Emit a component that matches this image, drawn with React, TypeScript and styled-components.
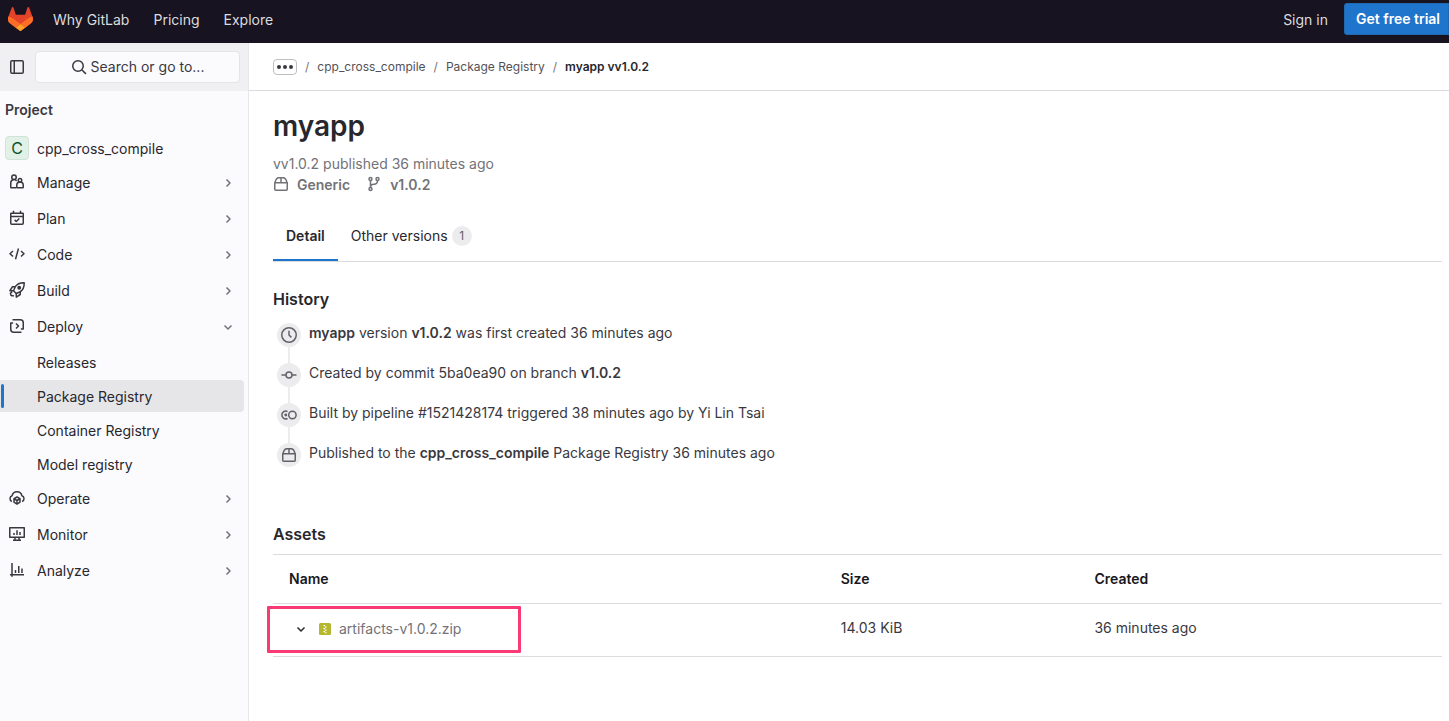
import React from 'react';
import styled, { createGlobalStyle, css } from 'styled-components';

const GlobalStyle = createGlobalStyle`
  *, *::before, *::after { box-sizing: border-box; }
  html, body { margin: 0; padding: 0; }
  body {
    background: #fff;
    color: #28272d;
    font-family: Inter, "Noto Sans", sans-serif;
    font-size: 14px;
    line-height: 20px;
  }
  a { color: inherit; text-decoration: none; }
  button { font: inherit; color: inherit; cursor: pointer; }
  ul, ol { list-style: none; margin: 0; padding: 0; }
  svg { display: block; flex: none; }
`;

/* ---------- icons ---------- */

type IconName =
  | 'sidebar' | 'search' | 'users' | 'planning' | 'code' | 'rocket' | 'deployments'
  | 'cloud-pod' | 'monitor' | 'chart' | 'chevron-right' | 'chevron-down' | 'package'
  | 'branch' | 'clock' | 'commit' | 'pipeline' | 'archive' | 'ellipsis';

const shapes: Record<IconName, React.ReactNode> = {
  sidebar: (
    <>
      <rect x="1.75" y="1.75" width="12.5" height="12.5" rx="1.25" />
      <path d="M5.25 2v12" />
    </>
  ),
  search: (
    <>
      <circle cx="7" cy="7" r="5.25" />
      <path d="m11 11 3.9 3.9" />
    </>
  ),
  users: (
    <>
      <circle cx="5" cy="3.25" r="2.25" />
      <path d="M7.250 13.75H2.25a.5.5 0 0 1-.5-.5V8.900a3.25 3.25 0 0 1 5.900-1.900" />
      <circle cx="11" cy="6.250" r="1.75" />
      <path d="M7.75 13.25V11.250a3.25 3.25 0 0 1 6.5 0v2a.5.5 0 0 1-.5.5h-5.5a.5.5 0 0 1-.5-.5Z" />
    </>
  ),
  planning: (
    <>
      <path d="M1.75 3.75a.5.5 0 0 1 .5-.5h11.5a.5.5 0 0 1 .5.5v9.5a1 1 0 0 1-1 1H2.75a1 1 0 0 1-1-1Z" />
      <path d="M2 6.5h12M4.5.8v2.4M11.5.8v2.4" />
      <path d="m5.6 9.9 1.7 1.6 3-3" />
    </>
  ),
  code: <path d="M4 5 1 7.75 4 10.5M12 5l3 2.75L12 10.5M9.5 2.5l-3 10.7" />,
  rocket: (
    <>
      <path d="M15.2.8c-4.4-.1-7.2 1.3-8.9 3.9L4.5 8.8l2.7 2.7 4.1-1.8c2.6-1.7 4-4.500 3.900-8.900Z" />
      <path d="M6.2 4.75H3.5L.9 8.7l3.4.1M11.25 9.8v2.7L7.3 15.1l-.1-3.4M3.1 9.7l-1.7 1.6.8 2.5M4.9 13.7l-2.7.1" />
      <circle cx="10.2" cy="5.8" r="1.2" fill="currentColor" />
    </>
  ),
  deployments: (
    <>
      <path d="M3.5 1.75h7.75a3 3 0 0 1 3 3V11h-2.4" />
      <path d="M12.5 14.25H4.75a3 3 0 0 1-3-3V5h2.4" />
      <path d="m7 5.5 2.5 2.5L7 10.5" />
    </>
  ),
  'cloud-pod': (
    <>
      <path d="M2.9 11.5A3.1 3.1 0 0 1 3.1 5.7a5 5 0 0 1 9.8 0 3.1 3.1 0 0 1 .2 5.8" />
      <path d="m8 7 3 1.6v3.6l-3 1.900-3-1.900V8.600ZM5 8.700l3 1.800 3-1.800M8 10.500V14" />
    </>
  ),
  monitor: (
    <>
      <path d="M.75 1.75h14.5v9.5H.75ZM6 11.5v2.7M10 11.5v2.7M4 14.25h8" />
      <path d="M5 7v2M8 4.2V9M11 6v3" />
    </>
  ),
  chart: <path d="M3 1v13.8M1 12.75h14M6.5 8v3M9.75 4v7M13 6.5V11" />,
  'chevron-right': <path d="m6.5 4.5 3.5 3.5-3.5 3.5" />,
  'chevron-down': <path d="M4.5 6.5 8 10l3.5-3.5" />,
  package: (
    <>
      <path d="M1.75 6.75h12.5v6.5a1 1 0 0 1-1 1H2.75a1 1 0 0 1-1-1Z" />
      <path d="M2 6.75c.5-2.700 1.600-4.600 3.500-5h5c1.900.4 3 2.300 3.500 5M8 1.75v5" />
    </>
  ),
  branch: (
    <>
      <circle cx="4.5" cy="3" r="1.5" />
      <circle cx="11.5" cy="3" r="1.5" />
      <circle cx="4.5" cy="13" r="1.5" />
      <path d="M4.500 4.500v7M11.500 4.500c0 2.700-1.200 3.700-3.500 3.700-2 0-3.500.5-3.500 2.500" />
    </>
  ),
  clock: (
    <>
      <circle cx="8" cy="8" r="7.25" />
      <path d="M8 3.7V8l2.4 2.4" />
    </>
  ),
  commit: (
    <>
      <circle cx="8" cy="8" r="3" />
      <path d="M.5 8h4.3M11.2 8h4.3" />
    </>
  ),
  pipeline: (
    <>
      <circle cx="11.4" cy="8" r="3.7" />
      <path d="M6.5 4.500A3.800 3.800 0 0 0 .9 8a3.800 3.800 0 0 0 5.600 3.500" />
      <circle cx="4.8" cy="8" r=".7" fill="currentColor" />
    </>
  ),
  archive: (
    <>
      <rect width="16" height="16" rx="2" fill="#b5b82e" stroke="none" />
      <path d="M6 3.5h2M8 5.5h2M6 7.5h2M8 9.5h2M6 11.5h2M8 13h2" stroke="#fff" />
    </>
  ),
  ellipsis: (
    <g fill="currentColor" stroke="none">
      <circle cx="2" cy="8" r="2" />
      <circle cx="8" cy="8" r="2" />
      <circle cx="14" cy="8" r="2" />
    </g>
  ),
};

const Icon = ({ name, size = 16 }: { name: IconName; size?: number }) => (
  <svg
    width={size}
    height={size}
    viewBox="0 0 16 16"
    fill="none"
    stroke="currentColor"
    strokeWidth="1.5"
    strokeLinejoin="round"
    aria-hidden="true"
  >
    {shapes[name]}
  </svg>
);

const Logo = () => (
  <svg width="25" height="24" viewBox="0 0 25 24" aria-hidden="true">
    <path fill="#E24329" d="m24.507 9.5-.034-.09L21.082.562a.896.896 0 0 0-1.694.091l-2.29 7.01H7.825L5.535.653a.898.898 0 0 0-1.694-.09L.451 9.411.416 9.5a6.297 6.297 0 0 0 2.09 7.278l.012.01.03.022 5.16 3.867 2.56 1.935 1.554 1.176a1.051 1.051 0 0 0 1.268 0l1.555-1.176 2.56-1.935 5.197-3.89.014-.01A6.297 6.297 0 0 0 24.507 9.5Z" />
    <path fill="#FC6D26" d="m24.507 9.5-.034-.09a11.44 11.44 0 0 0-4.56 2.051l-7.447 5.632 4.742 3.584 5.197-3.89.014-.01A6.297 6.297 0 0 0 24.507 9.5Z" />
    <path fill="#FCA326" d="m7.707 20.677 2.56 1.935 1.555 1.176a1.051 1.051 0 0 0 1.268 0l1.555-1.176 2.56-1.935-4.743-3.584-4.755 3.584Z" />
    <path fill="#FC6D26" d="M5.01 11.461a11.43 11.43 0 0 0-4.56-2.05L.416 9.5a6.297 6.297 0 0 0 2.09 7.278l.012.01.03.022 5.16 3.867 4.745-3.584-7.444-5.632Z" />
  </svg>
);

/* ---------- page frame ---------- */

const Page = styled.div`
  min-height: 100vh;
  display: flex;
  flex-direction: column;
`;

const TopBar = styled.header`
  display: flex;
  align-items: center;
  padding: 3px 0 8px 8px;
  background: #171321;
  color: #dcdcde;
`;

const TopNav = styled.nav`
  display: flex;
  flex: 1;
  gap: 24px;
  margin-left: 20px;
`;

const TopLink = styled.a`
  padding-top: 2px;
  font-weight: 400;
`;

const TrialButton = styled.button`
  height: 32px;
  margin-left: 16px;
  padding: 0 9px 0 12px;
  border: 0;
  border-radius: 4px 0 0 4px;
  background: #1f75cb;
  box-shadow: inset 0 0 0 1px #2268ae;
  color: #fff;
  font-weight: 600;
  white-space: nowrap;
`;

const Columns = styled.div`
  display: flex;
  flex: 1;
`;

/* ---------- sidebar ---------- */

const Sidebar = styled.aside`
  flex: 0 0 249px;
  border-right: 1px solid #e7e7ea;
  background: #fbfafd;
`;

const SidebarHead = styled.div`
  display: flex;
  align-items: center;
  gap: 10px;
  padding: 8px 8px 8px 9px;
  background: #f0f0f2;
`;

const IconButton = styled.button`
  padding: 0;
  border: 0;
  background: none;
  color: #3a383f;
`;

const SearchButton = styled.button`
  display: flex;
  flex: 1;
  align-items: center;
  justify-content: center;
  gap: 4px;
  height: 32px;
  padding: 0;
  border: 1px solid #e4e4e7;
  border-radius: 4px;
  background: #fbfafd;
  color: #3a383f;
`;

const SidebarTitle = styled.h2`
  margin: 0;
  padding: 9px 5px 12px;
  font-size: 14px;
  font-weight: 600;
  line-height: 20px;
  color: #3a383f;
`;

const NavItem = styled.li<{ $gap?: number }>`
  margin-bottom: ${({ $gap = 4 }) => $gap}px;
`;

const rowStyle = css`
  display: flex;
  align-items: center;
  width: 244px;
  height: 32px;
  border: 0;
  border-radius: 0 4px 4px 0;
  text-align: left;
`;

const ProjectLink = styled.a`
  ${rowStyle}
  gap: 8px;
  padding: 2px 0 0 5px;
`;

const Avatar = styled.span`
  width: 24px;
  height: 24px;
  margin-bottom: 2px;
  border: 1px solid #cfe3d6;
  border-radius: 4px;
  background: #e2f1e7;
  color: #0d532a;
  font-size: 16px;
  line-height: 22px;
  text-align: center;
`;

const SectionButton = styled.button`
  ${rowStyle}
  gap: 12px;
  padding: 2px 8px 0 9px;
  background: none;
`;

const SectionIcon = styled.span`
  margin-bottom: 2px;
  color: #3a383f;
`;

const Chevron = styled.span`
  margin-left: auto;
  color: #737278;
`;

const SubList = styled.ul`
  display: grid;
  gap: 2px;
  margin-top: 4px;
`;

const SubLink = styled.a<{ $active?: boolean }>`
  ${rowStyle}
  padding: 2px 0 0 ${({ $active }) => ($active ? 1 : 37)}px;
  background: ${({ $active }) => ($active ? '#e6e6e8' : 'transparent')};
  ${({ $active }) =>
    $active &&
    css`
      &::before {
        content: '';
        width: 3px;
        height: 24px;
        margin: 0 33px 2px 0;
        border-radius: 2px;
        background: #1f75cb;
      }
    `}
`;

/* ---------- content ---------- */

const Content = styled.div`
  flex: 1;
  min-width: 0;
`;

const Crumbs = styled.nav`
  border-bottom: 1px solid #dcdcde;
  padding: 12px 24px;
  font-size: 12px;
  line-height: 23px;
  color: #535158;
`;

const CrumbList = styled.ol`
  display: flex;
  align-items: center;
`;

const Crumb = styled.li<{ $current?: boolean }>`
  display: flex;
  align-items: center;
  font-weight: ${({ $current }) => ($current ? 600 : 400)};
  color: ${({ $current }) => ($current ? '#28272d' : 'inherit')};
  &:not(:first-child)::before {
    content: '/';
    margin: 0 8px;
    font-weight: 400;
    color: #737278;
  }
`;

const MoreButton = styled.button`
  display: flex;
  align-items: center;
  justify-content: center;
  width: 24px;
  height: 16px;
  padding: 0;
  border: 1px solid #bfbfc3;
  border-radius: 4px;
  background: #fff;
  color: #3a383f;
`;

const Main = styled.main`
  padding: 17px 7px 32px 24px;
`;

const Title = styled.h1`
  margin: 0 0 10px;
  font-size: 28px;
  font-weight: 600;
  line-height: 36px;
`;

const Published = styled.p`
  margin: 0;
  color: #737278;
`;

const Facts = styled.ul`
  display: flex;
  gap: 16px;
  color: #737278;
  font-weight: 600;
`;

const Fact = styled.li`
  display: flex;
  align-items: center;
  gap: 8px;
  line-height: 22px;
  svg { margin-bottom: 2px; }
`;

const Tabs = styled.div`
  display: flex;
  margin-top: 15px;
  border-bottom: 1px solid #dcdcde;
`;

const Tab = styled.button<{ $active?: boolean }>`
  display: flex;
  align-items: center;
  gap: 4px;
  height: 50px;
  padding: 0 13px;
  border: 0;
  background: none;
  font-weight: ${({ $active }) => ($active ? 600 : 400)};
  box-shadow: ${({ $active }) => ($active ? 'inset 0 -2px 0 #1f75cb' : 'none')};
`;

const Badge = styled.span`
  min-width: 20px;
  border-radius: 10px;
  background: #ececef;
  color: #626168;
  font-size: 12px;
  font-weight: 400;
  text-align: center;
`;

const SectionTitle = styled.h2`
  margin: 0;
  font-size: 16px;
  font-weight: 600;
  line-height: 20px;
`;

const HistorySection = styled.section`
  padding-top: 27px;
`;

const Timeline = styled.ol`
  margin: 14px 0 0 4px;
`;

const Event = styled.li`
  display: flex;
  gap: 8px;
  height: 40px;
  color: #3a383f;
  &:last-child .rail::after { display: none; }
`;

const Rail = styled.span.attrs({ className: 'rail' })`
  display: flex;
  flex-direction: column;
  align-items: center;
  &::after {
    content: '';
    flex: 1;
    width: 2px;
    background: #ececef;
  }
`;

const Dot = styled.span`
  display: flex;
  align-items: center;
  justify-content: center;
  width: 24px;
  height: 24px;
  border-radius: 50%;
  background: #ececef;
  color: #626168;
`;

const Bold = styled.strong`
  font-weight: 600;
`;

const AssetsSection = styled.section`
  padding-top: 41px;
`;

const AssetTable = styled.table`
  width: 100%;
  margin-top: 10px;
  border-collapse: collapse;
  table-layout: fixed;
  border-top: 1px solid #dcdcde;
`;

const HeadCell = styled.th<{ $width?: string }>`
  width: ${({ $width = 'auto' }) => $width};
  height: 49px;
  padding: 0 16px;
  border-bottom: 1px solid #dcdcde;
  text-align: left;
  font-weight: 600;
  color: #18171d;
`;

const Cell = styled.td`
  position: relative;
  height: 53px;
  padding: 14px 16px 0;
  border-bottom: 1px solid #dcdcde;
  vertical-align: top;
  color: #3a383f;
`;

const FileRow = styled.div`
  display: flex;
  align-items: center;
  color: #737278;
`;

const ExpandButton = styled.button`
  margin: 0 10px 0 4px;
  padding: 0;
  border: 0;
  background: none;
  color: #28272d;
`;

const FileLink = styled.a`
  display: flex;
  align-items: center;
  gap: 8px;
  line-height: 22px;
`;

const Highlight = styled.span`
  position: absolute;
  top: 2px;
  left: -6px;
  width: 254px;
  height: 47px;
  border: 3px solid #fa3a74;
  border-radius: 1px;
  pointer-events: none;
`;

/* ---------- data ---------- */

interface Section {
  label: string;
  icon: IconName;
  children?: string[];
}

const sections: Section[] = [
  { label: 'Manage', icon: 'users' },
  { label: 'Plan', icon: 'planning' },
  { label: 'Code', icon: 'code' },
  { label: 'Build', icon: 'rocket' },
  {
    label: 'Deploy',
    icon: 'deployments',
    children: ['Releases', 'Package Registry', 'Container Registry', 'Model registry'],
  },
  { label: 'Operate', icon: 'cloud-pod' },
  { label: 'Monitor', icon: 'monitor' },
  { label: 'Analyze', icon: 'chart' },
];

const events: { icon: IconName; text: React.ReactNode }[] = [
  {
    icon: 'clock',
    text: <><Bold>myapp</Bold> version <Bold>v1.0.2</Bold> was first created 36 minutes ago</>,
  },
  {
    icon: 'commit',
    text: <>Created by commit <a href="#commit">5ba0ea90</a> on branch <Bold>v1.0.2</Bold></>,
  },
  {
    icon: 'pipeline',
    text: <>Built by pipeline <a href="#pipeline">#1521428174</a> triggered 38 minutes ago by Yi Lin Tsai</>,
  },
  {
    icon: 'package',
    text: <>Published to the <Bold>cpp_cross_compile</Bold> Package Registry 36 minutes ago</>,
  },
];

export default function App() {
  return (
    <Page>
      <GlobalStyle />
      <TopBar>
        <a href="#home" aria-label="Homepage"><Logo /></a>
        <TopNav aria-label="Site">
          <TopLink href="#why">Why GitLab</TopLink>
          <TopLink href="#pricing">Pricing</TopLink>
          <TopLink href="#explore">Explore</TopLink>
        </TopNav>
        <TopLink href="#signin">Sign in</TopLink>
        <TrialButton>Get free trial</TrialButton>
      </TopBar>

      <Columns>
        <Sidebar>
          <SidebarHead>
            <IconButton aria-label="Primary navigation sidebar"><Icon name="sidebar" /></IconButton>
            <SearchButton><Icon name="search" />Search or go to...</SearchButton>
          </SidebarHead>
          <SidebarTitle>Project</SidebarTitle>
          <nav aria-label="Project">
            <ul>
              <NavItem $gap={2}>
                <ProjectLink href="#project"><Avatar>C</Avatar>cpp_cross_compile</ProjectLink>
              </NavItem>
              {sections.map(({ label, icon, children }) => (
                <NavItem key={label} $gap={children ? 2 : 4}>
                  <SectionButton aria-expanded={Boolean(children)}>
                    <SectionIcon><Icon name={icon} /></SectionIcon>
                    {label}
                    <Chevron><Icon name={children ? 'chevron-down' : 'chevron-right'} /></Chevron>
                  </SectionButton>
                  {children && (
                    <SubList>
                      {children.map((child) => (
                        <li key={child}>
                          <SubLink href="#section" $active={child === 'Package Registry'}>{child}</SubLink>
                        </li>
                      ))}
                    </SubList>
                  )}
                </NavItem>
              ))}
            </ul>
          </nav>
        </Sidebar>

        <Content>
          <Crumbs aria-label="Breadcrumb">
            <CrumbList>
              <Crumb><MoreButton aria-label="Show more breadcrumbs"><Icon name="ellipsis" /></MoreButton></Crumb>
              <Crumb><a href="#project">cpp_cross_compile</a></Crumb>
              <Crumb><a href="#registry">Package Registry</a></Crumb>
              <Crumb $current><a href="#package" aria-current="page">myapp vv1.0.2</a></Crumb>
            </CrumbList>
          </Crumbs>

          <Main>
            <Title>myapp</Title>
            <Published>vv1.0.2 published 36 minutes ago</Published>
            <Facts>
              <Fact><Icon name="package" />Generic</Fact>
              <Fact><Icon name="branch" />v1.0.2</Fact>
            </Facts>

            <Tabs role="tablist">
              <Tab role="tab" aria-selected="true" $active>Detail</Tab>
              <Tab role="tab" aria-selected="false">Other versions<Badge>1</Badge></Tab>
            </Tabs>

            <HistorySection>
              <SectionTitle>History</SectionTitle>
              <Timeline>
                {events.map(({ icon, text }) => (
                  <Event key={icon}>
                    <Rail><Dot><Icon name={icon} /></Dot></Rail>
                    <span>{text}</span>
                  </Event>
                ))}
              </Timeline>
            </HistorySection>

            <AssetsSection>
              <SectionTitle>Assets</SectionTitle>
              <AssetTable>
                <thead>
                  <tr>
                    <HeadCell $width="47.2%">Name</HeadCell>
                    <HeadCell $width="21.7%">Size</HeadCell>
                    <HeadCell>Created</HeadCell>
                  </tr>
                </thead>
                <tbody>
                  <tr>
                    <Cell>
                      <FileRow>
                        <ExpandButton aria-label="Expand row"><Icon name="chevron-down" /></ExpandButton>
                        <FileLink href="#file"><Icon name="archive" size={12} />artifacts-v1.0.2.zip</FileLink>
                      </FileRow>
                      <Highlight />
                    </Cell>
                    <Cell>14.03 KiB</Cell>
                    <Cell>36 minutes ago</Cell>
                  </tr>
                </tbody>
              </AssetTable>
            </AssetsSection>
          </Main>
        </Content>
      </Columns>
    </Page>
  );
}
